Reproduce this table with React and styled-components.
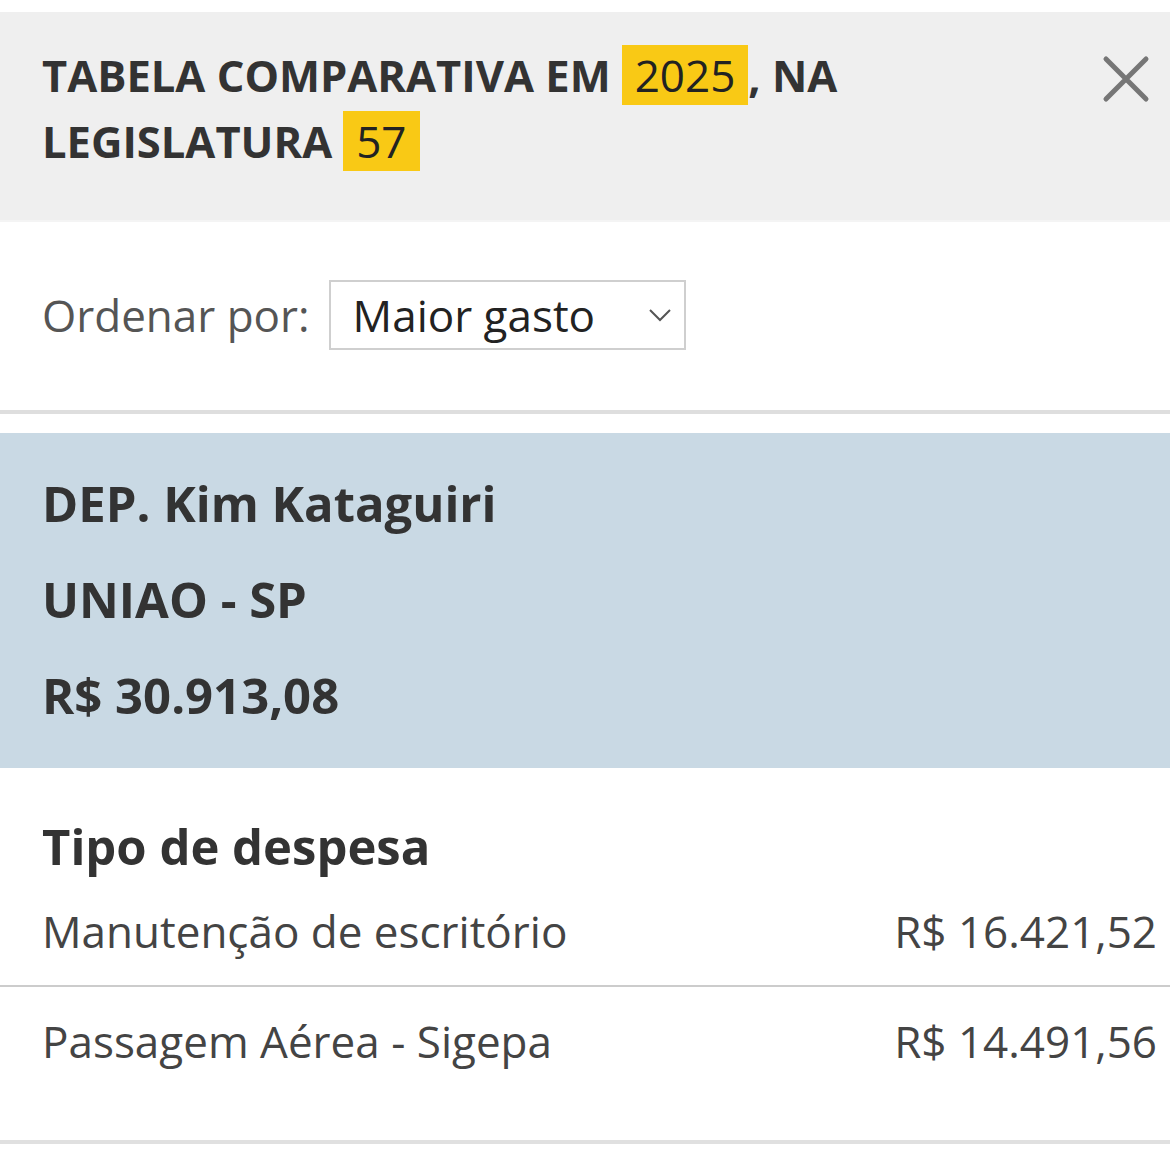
import React from "react";
import styled, { createGlobalStyle } from "styled-components";

const GlobalStyle = createGlobalStyle`
  html, body {
    margin: 0;
    padding: 0;
    background: #ffffff;
  }
  body {
    font-family: "Open Sans", "Liberation Sans", sans-serif;
    color: #333;
  }
`;

const Page = styled.div`
  padding-top: 12px;
  width: 1170px;
`;

// Cabeçalho cinza com título e botão de fechar
const Header = styled.header`
  background: #efefef;
  display: flex;
  justify-content: space-between;
  align-items: flex-start;
  padding: 31px 20px 45px 42px;
  border-bottom: 2px solid #f4f4f4;
`;

const Title = styled.h1`
  margin: 0;
  font-size: 43.5px;
  line-height: 66px;
  font-weight: 700;
  color: #333;
  max-width: 840px;
`;

const Mark = styled.span`
  display: inline-block;
  background: #f9c915;
  font-weight: 400;
  font-size: 44px;
  line-height: 60px;
  padding: 0 13px;
  margin-left: ${(p) => p.$gap || 0}px;
  color: #222;
`;

const Close = styled.button`
  border: 0;
  background: none;
  padding: 0;
  margin-top: 12px;
  cursor: pointer;
  display: flex;
`;

const SortRow = styled.div`
  display: flex;
  align-items: center;
  gap: 19px;
  padding: 58px 0 60px 42px;
  border-bottom: 4px solid #dedede;
`;

const SortLabel = styled.span`
  font-size: 44px;
  color: #555;
`;

const Select = styled.div`
  width: 357px;
  height: 70px;
  border: 2px solid #cfcfcf;
  display: flex;
  align-items: center;
  justify-content: space-between;
  padding: 0 12px 0 22px;
  box-sizing: border-box;
  font-size: 44px;
  line-height: 60px;
  color: #222;
`;

const Card = styled.section`
  margin-top: 19px;
  background: #c9d9e4;
  padding: 22px 42px 25px;
  display: flex;
  flex-direction: column;
`;

const CardLine = styled.div`
  font-size: 49px;
  font-weight: 700;
  line-height: 96px;
  color: #333;
`;

const Expenses = styled.section`
  padding: 45px 0 0;
  border-bottom: 4px solid #e0e0e0;
`;

const ExpTitle = styled.h2`
  margin: 0;
  padding-left: 42px;
  font-size: 49px;
  font-weight: 700;
  line-height: 66px;
  color: #333;
`;

const ExpRow = styled.div`
  display: flex;
  justify-content: space-between;
  align-items: baseline;
  padding: ${(p) => (p.$last ? "24px 13px 69px 42px" : "22px 13px 24px 42px")};
  border-bottom: ${(p) => (p.$last ? "none" : "2px solid #cccccc")};
  font-size: 44px;
  color: #444;
  line-height: 60px;
`;

function App() {
  return (
    <Page>
      <GlobalStyle />
      <Header>
        <Title>
          TABELA COMPARATIVA EM<Mark $gap={11}>2025</Mark>, NA
          <br />
          LEGISLATURA<Mark $gap={11}>57</Mark>
        </Title>
        <Close aria-label="Fechar">
          <svg width="48" height="48" viewBox="0 0 48 48">
            <path
              d="M4 4 L44 44 M44 4 L4 44"
              stroke="#767676"
              strokeWidth="5"
              strokeLinecap="round"
            />
          </svg>
        </Close>
      </Header>

      <SortRow>
        <SortLabel>Ordenar por:</SortLabel>
        <Select>
          <span>Maior gasto</span>
          <svg width="24" height="14" viewBox="0 0 24 14">
            <path d="M2 2 L12 12 L22 2" fill="none" stroke="#555" strokeWidth="2" />
          </svg>
        </Select>
      </SortRow>

      <Card>
        <CardLine>DEP. Kim Kataguiri</CardLine>
        <CardLine>UNIAO - SP</CardLine>
        <CardLine>R$ 30.913,08</CardLine>
      </Card>

      <Expenses>
        <ExpTitle>Tipo de despesa</ExpTitle>
        <ExpRow>
          <span>Manutenção de escritório</span>
          <span>R$ 16.421,52</span>
        </ExpRow>
        <ExpRow $last>
          <span>Passagem Aérea - Sigepa</span>
          <span>R$ 14.491,56</span>
        </ExpRow>
      </Expenses>
    </Page>
  );
}

export default App;
